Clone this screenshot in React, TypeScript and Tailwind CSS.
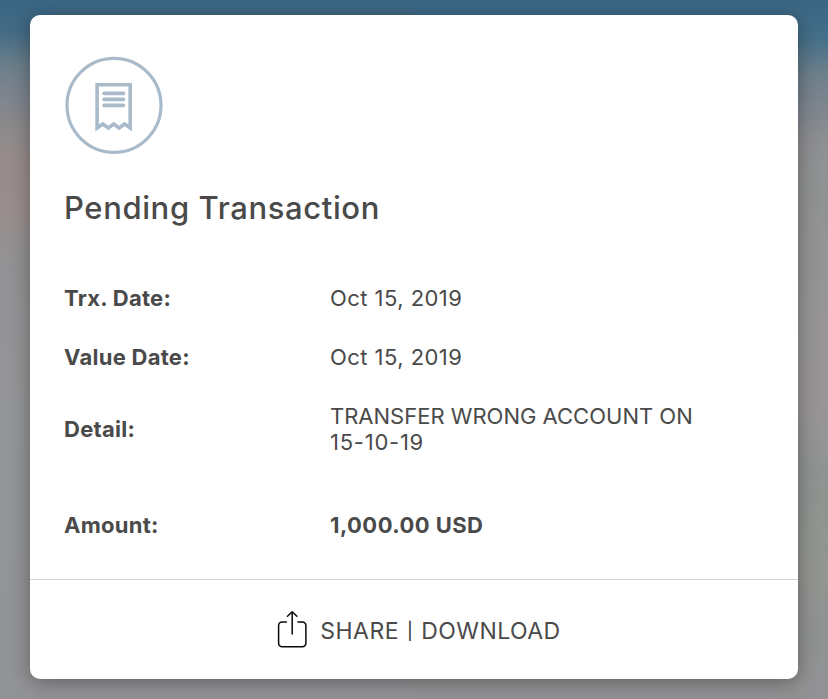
import type { ReactNode } from 'react'

type RowProps = {
  label: string
  value: ReactNode
  className?: string
  bold?: boolean
}

function ReceiptIcon() {
  return (
    <svg width="98" height="98" viewBox="0 0 98 98" fill="none" stroke="#a9bbca">
      <circle cx="49" cy="49.3" r="47" strokeWidth="3.2" />
      <path
        d="M32.1 72V28.8h33.1V72l-5.6-4-5.5 4-5.4-4-5.4 4-5.5-4z"
        strokeWidth="3.6"
      />
      <path
        d="M39 37.4h19.4M39 43.4h19.4M39 49.4h19.4"
        strokeWidth="3.6"
        strokeLinecap="round"
      />
    </svg>
  )
}

function ShareIcon() {
  return (
    <svg
      width="30"
      height="38"
      viewBox="0 0 30 38"
      fill="none"
      stroke="#0a0a0a"
      strokeWidth="1.5"
      strokeLinecap="round"
      strokeLinejoin="round"
    >
      <path d="M9.4 10.9H5.1a3.5 3.5 0 0 0-3.5 3.5v17.8a3.5 3.5 0 0 0 3.5 3.5h20.3a3.5 3.5 0 0 0 3.5-3.5V14.4a3.5 3.5 0 0 0-3.5-3.5h-4.5" />
      <path d="M15.2 23V.9M10.5 5.3 15.2.8l4.7 4.5" />
    </svg>
  )
}

function Row({ label, value, className = '', bold }: RowProps) {
  return (
    <div
      className={`flex items-center text-[22px] leading-[26px] text-[#4a4a4a] ${className}`}
    >
      <dt className="w-[266px] shrink-0 font-bold tracking-[0.27px]">{label}</dt>
      <dd
        className={
          bold ? 'font-bold tracking-[0.45px]' : 'font-normal tracking-[0.45px]'
        }
      >
        {value}
      </dd>
    </div>
  )
}

function App() {
  return (
    <div className="flex h-[699px] w-[828px] bg-[linear-gradient(#3a6684_0px,#446b85_32px,#6b7f8b_65px,#80858f_100px,#8e8a8b_130px,#988c8b_165px,#988e8d_215px,#929294_265px,#949597_400px,#929395_699px),linear-gradient(#3a6684_0px,#456f8a_38px,#6e808b_75px,#80868f_110px,#8f9092_145px,#929393_220px,#979595_310px,#999596_410px,#8f9492_470px,#92958f_550px,#919393_640px,#929295_699px)] bg-[size:50%_100%] bg-[position:left,right] bg-no-repeat px-[30px] pt-[15px] pb-5 font-['Inter',sans-serif]">
      <section className="flex flex-1 flex-col overflow-hidden rounded-[10px] bg-white shadow-[0_3px_20px_rgba(0,0,0,0.35)]">
        <div className="h-[564px] pt-[41px] pl-[34px]">
          <div className="pl-px">
            <ReceiptIcon />
          </div>
          <h1 className="mt-[34px] text-[31px] leading-10 font-[450] tracking-[0.62px] text-[#4a4a4a]">
            Pending Transaction
          </h1>
          <dl className="mt-[57px]">
            <Row label="Trx. Date:" value="Oct 15, 2019" />
            <Row label="Value Date:" value="Oct 15, 2019" className="mt-[33px]" />
            <Row
              label="Detail:"
              value={
                <>
                  <span className="block tracking-[0px]">
                    TRANSFER WRONG ACCOUNT ON
                  </span>
                  <span className="block tracking-[0.75px]">15-10-19</span>
                </>
              }
              className="mt-[33px]"
            />
            <Row
              label="Amount:"
              value="1,000.00 USD"
              className="mt-[57px]"
              bold
            />
          </dl>
        </div>
        <button className="flex flex-1 items-center justify-center gap-[13px] border-t border-[#d4d4d4] pl-[10px] text-[23px] tracking-[0.45px] text-[#4a4a4a]">
          <ShareIcon />
          <span className="flex items-center gap-2 pt-[3px]">
            <span>SHARE</span>
            <span className="pt-0.5 text-[17px] font-medium">|</span>
            <span>DOWNLOAD</span>
          </span>
        </button>
      </section>
    </div>
  )
}

export default App
